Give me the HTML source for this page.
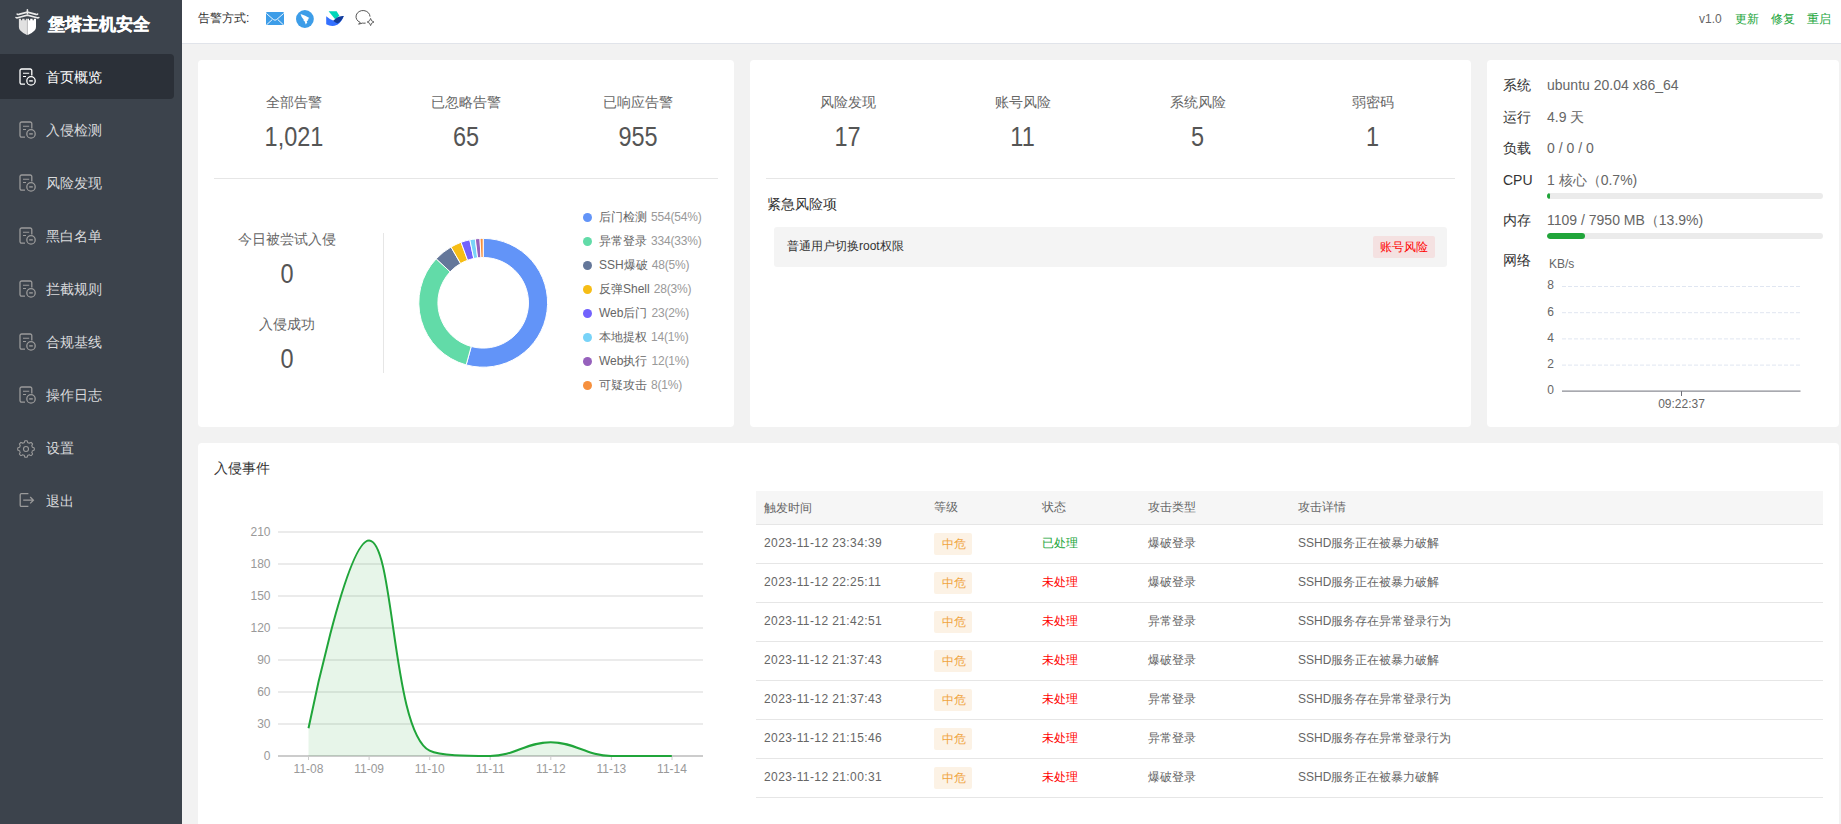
<!DOCTYPE html>
<html><head><meta charset="utf-8"><style>
*{box-sizing:border-box;margin:0;padding:0}
html,body{width:1841px;height:824px;overflow:hidden}
body{background:#f2f2f2;font-family:"Liberation Sans",sans-serif;color:#333;position:relative}
.abs{position:absolute}
#side{position:absolute;left:0;top:0;width:182px;height:824px;background:#3c434c}
#logo{position:absolute;left:48px;top:13.5px;-webkit-text-stroke:0.35px #fff;font-size:17px;font-weight:bold;color:#fff;line-height:22px;letter-spacing:0px}
.act-bg{position:absolute;left:0;top:54px;width:174px;height:45px;background:#2b3038;border-radius:0 4px 4px 0}
.mi{position:absolute;left:0;width:182px;height:0}
.mi span{position:absolute;left:46px;top:-9px;font-size:14px;line-height:20px;color:#d9dadc;white-space:nowrap}
.mi.act span{color:#fff}
#hdr{position:absolute;left:182px;top:0;width:1659px;height:44px;background:#fff;border-bottom:1px solid #e1e4ea}
.card{position:absolute;background:#fff;border-radius:4px}
.stat{position:absolute;text-align:center;width:172px}
.stat .l{font-size:14px;color:#666;line-height:20px}
.stat .n{font-size:27px;color:#555;line-height:30px;margin-top:10.4px;transform:scaleX(0.87)}
.lg{position:absolute;left:582px;height:0}
.lg i{position:absolute;left:0.8px;top:-3.8px;width:9px;height:9px;border-radius:50%}
.lg span{position:absolute;top:-8px;font-size:12px;line-height:16px;white-space:nowrap}
.lg .ln{left:17px;color:#666}
.lg .lv{font-weight:normal;color:#999;margin-left:4px;letter-spacing:-0.2px}
.tr{position:absolute;left:756px;width:1067px;height:39px;border-bottom:1px solid #e6e6e6;font-size:12px;color:#666}
.tr span{position:absolute;top:10px;line-height:16px;white-space:nowrap}
.c1{letter-spacing:0.4px}
.c1{left:8px} .c2{left:178px} .c3{left:286px} .c4{left:392px} .c5{left:542px}
.tag{display:inline-block;font-weight:normal;background:#fcf2e5;color:#f0a43e;padding-left:1px;width:38px;height:22px;line-height:22px;text-align:center;border-radius:2px;margin-top:-2px}
.ok{color:#20a53a} .no{color:#f00}
.ax{font-size:12px;fill:#999;font-family:"Liberation Sans",sans-serif}
.nx{font-size:12px;fill:#666;font-family:"Liberation Sans",sans-serif}
.sys{position:absolute;left:1503px;height:0;font-size:14px;white-space:nowrap}
.sys .k{position:absolute;left:0;top:-10px;line-height:20px;color:#333}
.sys .v{position:absolute;left:44px;top:-10px;line-height:20px;color:#666}
.bar{position:absolute;left:1547px;width:276px;height:6px;background:#ebebeb;border-radius:3px;overflow:hidden}
.bar i{position:absolute;left:0;top:0;height:6px;background:#20a53a;border-radius:3px}
</style></head><body>
<div id="side">
<svg width="50" height="40" style="position:absolute;left:0;top:0">
<g fill="none" stroke="#eaeaea" stroke-width="1.6" stroke-linecap="round"><path d="M27.4 9.8V13.6"/><path d="M17.2 14.1Q17.8 14.6 18.8 14.4L27.4 12.2L36 14.4Q37 14.6 37.6 14.1"/><path d="M16 17.5Q16.6 18 17.6 17.8L27.4 15.2L37.2 17.8Q38.2 18 38.8 17.5"/></g>
<path d="M18.9 18.8H21V20.3H22.2V18.8H24.6V20.3H25.8V18.8H27V35Q22.5 33.2 20.3 30.6Q18.9 29 18.9 27Z" fill="#e1e1e1"/>
<rect x="26.9" y="18.8" width="1" height="16" fill="#bdbdbd"/><path d="M27.8 18.8H29V20.3H30.2V18.8H32.6V20.3H33.8V18.8H36V27Q36 29 34.6 30.6Q32.4 33.2 27.8 35Z" fill="#fff"/>
</svg>
<div id="logo">堡塔主机安全</div>
<div class="act-bg"></div>
<div class="mi act" style="top:76px"><svg width="18" height="19" viewBox="0 0 18 19" style="position:absolute;left:18px;top:-9.5px"><g fill="none" stroke="#fff" stroke-width="1.3"><path d="M7 17.2H3.6a1.6 1.6 0 0 1-1.6-1.6V3.6A1.6 1.6 0 0 1 3.6 2h8.6a1.6 1.6 0 0 1 1.6 1.6V8.6"/><path d="M5 6.2H11.2M5 9.5H8" stroke-width="1.1"/><circle cx="13" cy="13.9" r="4.2"/><path d="M11.2 13.9H14.8" stroke-width="1.4"/></g></svg><span>首页概览</span></div>
<div class="mi" style="top:129px"><svg width="18" height="19" viewBox="0 0 18 19" style="position:absolute;left:18px;top:-9.5px"><g fill="none" stroke="#9a9a9a" stroke-width="1.3"><path d="M7 17.2H3.6a1.6 1.6 0 0 1-1.6-1.6V3.6A1.6 1.6 0 0 1 3.6 2h8.6a1.6 1.6 0 0 1 1.6 1.6V8.6"/><path d="M5 6.2H11.2M5 9.5H8" stroke-width="1.1"/><circle cx="13" cy="13.9" r="4.2"/><path d="M11.2 13.9H14.8" stroke-width="1.4"/></g></svg><span>入侵检测</span></div>
<div class="mi" style="top:182px"><svg width="18" height="19" viewBox="0 0 18 19" style="position:absolute;left:18px;top:-9.5px"><g fill="none" stroke="#9a9a9a" stroke-width="1.3"><path d="M7 17.2H3.6a1.6 1.6 0 0 1-1.6-1.6V3.6A1.6 1.6 0 0 1 3.6 2h8.6a1.6 1.6 0 0 1 1.6 1.6V8.6"/><path d="M5 6.2H11.2M5 9.5H8" stroke-width="1.1"/><circle cx="13" cy="13.9" r="4.2"/><path d="M11.2 13.9H14.8" stroke-width="1.4"/></g></svg><span>风险发现</span></div>
<div class="mi" style="top:235px"><svg width="18" height="19" viewBox="0 0 18 19" style="position:absolute;left:18px;top:-9.5px"><g fill="none" stroke="#9a9a9a" stroke-width="1.3"><path d="M7 17.2H3.6a1.6 1.6 0 0 1-1.6-1.6V3.6A1.6 1.6 0 0 1 3.6 2h8.6a1.6 1.6 0 0 1 1.6 1.6V8.6"/><path d="M5 6.2H11.2M5 9.5H8" stroke-width="1.1"/><circle cx="13" cy="13.9" r="4.2"/><path d="M11.2 13.9H14.8" stroke-width="1.4"/></g></svg><span>黑白名单</span></div>
<div class="mi" style="top:288px"><svg width="18" height="19" viewBox="0 0 18 19" style="position:absolute;left:18px;top:-9.5px"><g fill="none" stroke="#9a9a9a" stroke-width="1.3"><path d="M7 17.2H3.6a1.6 1.6 0 0 1-1.6-1.6V3.6A1.6 1.6 0 0 1 3.6 2h8.6a1.6 1.6 0 0 1 1.6 1.6V8.6"/><path d="M5 6.2H11.2M5 9.5H8" stroke-width="1.1"/><circle cx="13" cy="13.9" r="4.2"/><path d="M11.2 13.9H14.8" stroke-width="1.4"/></g></svg><span>拦截规则</span></div>
<div class="mi" style="top:341px"><svg width="18" height="19" viewBox="0 0 18 19" style="position:absolute;left:18px;top:-9.5px"><g fill="none" stroke="#9a9a9a" stroke-width="1.3"><path d="M7 17.2H3.6a1.6 1.6 0 0 1-1.6-1.6V3.6A1.6 1.6 0 0 1 3.6 2h8.6a1.6 1.6 0 0 1 1.6 1.6V8.6"/><path d="M5 6.2H11.2M5 9.5H8" stroke-width="1.1"/><circle cx="13" cy="13.9" r="4.2"/><path d="M11.2 13.9H14.8" stroke-width="1.4"/></g></svg><span>合规基线</span></div>
<div class="mi" style="top:394px"><svg width="18" height="19" viewBox="0 0 18 19" style="position:absolute;left:18px;top:-9.5px"><g fill="none" stroke="#9a9a9a" stroke-width="1.3"><path d="M7 17.2H3.6a1.6 1.6 0 0 1-1.6-1.6V3.6A1.6 1.6 0 0 1 3.6 2h8.6a1.6 1.6 0 0 1 1.6 1.6V8.6"/><path d="M5 6.2H11.2M5 9.5H8" stroke-width="1.1"/><circle cx="13" cy="13.9" r="4.2"/><path d="M11.2 13.9H14.8" stroke-width="1.4"/></g></svg><span>操作日志</span></div>
<div class="mi" style="top:447px"><svg width="20" height="20" viewBox="0 0 20 20" style="position:absolute;left:16.4px;top:-8.5px"><g fill="none" stroke="#9a9a9a" stroke-width="1.1"><path d="M10.00 1.70L10.54 1.72L11.08 1.77L11.45 2.69L11.71 3.62L12.12 3.75L12.53 3.90L12.92 4.08L13.30 4.28L14.14 3.81L15.05 3.42L15.47 3.76L15.87 4.13L16.24 4.53L16.58 4.95L16.19 5.86L15.72 6.70L15.92 7.08L16.10 7.47L16.25 7.88L16.38 8.29L17.31 8.55L18.23 8.92L18.28 9.46L18.30 10.00L18.28 10.54L18.23 11.08L17.31 11.45L16.38 11.71L16.25 12.12L16.10 12.53L15.92 12.92L15.72 13.30L16.19 14.14L16.58 15.05L16.24 15.47L15.87 15.87L15.47 16.24L15.05 16.58L14.14 16.19L13.30 15.72L12.92 15.92L12.53 16.10L12.12 16.25L11.71 16.38L11.45 17.31L11.08 18.23L10.54 18.28L10.00 18.30L9.46 18.28L8.92 18.23L8.55 17.31L8.29 16.38L7.88 16.25L7.47 16.10L7.08 15.92L6.70 15.72L5.86 16.19L4.95 16.58L4.53 16.24L4.13 15.87L3.76 15.47L3.42 15.05L3.81 14.14L4.28 13.30L4.08 12.92L3.90 12.53L3.75 12.12L3.62 11.71L2.69 11.45L1.77 11.08L1.72 10.54L1.70 10.00L1.72 9.46L1.77 8.92L2.69 8.55L3.62 8.29L3.75 7.88L3.90 7.47L4.08 7.08L4.28 6.70L3.81 5.86L3.42 4.95L3.76 4.53L4.13 4.13L4.53 3.76L4.95 3.42L5.86 3.81L6.70 4.28L7.08 4.08L7.47 3.90L7.88 3.75L8.29 3.62L8.55 2.69L8.92 1.77L9.46 1.72L10.00 1.70Z" stroke-linejoin="round"/><circle cx="10" cy="10" r="2.5"/></g></svg><span>设置</span></div>
<div class="mi" style="top:500px"><svg width="20" height="20" viewBox="0 0 20 20" style="position:absolute;left:16px;top:-10px"><g fill="none" stroke="#9a9a9a" stroke-width="1.3"><path d="M12.4 3.6H5.4a1.2 1.2 0 0 0-1.2 1.2v10.4a1.2 1.2 0 0 0 1.2 1.2h7"/><path d="M7.2 10.2H17.4M14.2 7l3.2 3.2-3.2 3.2"/></g></svg><span>退出</span></div>

</div>
<div id="hdr">
<div class="abs" style="left:16px;top:10px;font-size:12px;line-height:16px;color:#333">告警方式:</div>
<svg class="abs" style="left:-182px;top:0" width="400" height="40">
<rect x="266" y="12" width="18" height="13" rx="1.2" fill="#3d9de8"/><path d="M266.3 13.4L273.3 19.5Q275 21 276.7 19.5L283.7 13.4M266.8 24.6L272.2 19.6M283.2 24.6L277.8 19.6" stroke="#fff" stroke-width="0.9" fill="none"/>
<circle cx="304.9" cy="19" r="8.9" fill="#3d9de8"/><path d="M300.6 14.1Q305.5 15.4 309.4 18L307.6 19.3L308.6 19.8L306.6 21.6L307.3 22.3L305.8 24.6L304.6 21.2L303.4 20.6L303.9 20Q301.2 17.5 300.6 14.1Z" fill="#fff"/>
<path d="M328.6 11.2H336.6L339.4 15.8L335.2 19.2Z" fill="#00d6b9"/>
<path d="M326.2 16.2Q330.5 20 334.2 21L337.8 18.3L343.8 16Q340.5 24.5 334.5 25.8Q330 26.5 326.2 24.2Z" fill="#3370ff"/>
<path d="M333.2 20.8L337 17.6Q340 15.6 343.8 16Q341.5 21.5 337.5 23.5Q335 22.5 333.2 20.8Z" fill="#133c9a"/>
<g fill="none" stroke="#555" stroke-width="1"><path d="M370 16.6A7 6.2 0 1 0 360.2 22.4L358.6 24.2L362.4 23.1Q363.6 23.3 365.6 23.1"/><path d="M370.6 18.4Q371 21.4 374 22Q371 22.6 370.6 25.6Q370.2 22.6 367.2 22Q370.2 21.4 370.6 18.4Z" stroke-linejoin="round" stroke-width="0.9"/></g>
</svg>
<div class="abs" style="left:1517px;top:11px;font-size:12px;line-height:16px;color:#666;white-space:nowrap">v1.0</div>
<div class="abs" style="left:1553px;top:11px;font-size:12px;line-height:16px;color:#20a53a;white-space:nowrap">更新</div>
<div class="abs" style="left:1589px;top:11px;font-size:12px;line-height:16px;color:#20a53a;white-space:nowrap">修复</div>
<div class="abs" style="left:1625px;top:11px;font-size:12px;line-height:16px;color:#20a53a;white-space:nowrap">重启</div>
</div>

<div class="card" style="left:198px;top:60px;width:536px;height:367px"></div>
<div class="card" style="left:750px;top:60px;width:721px;height:367px"></div>
<div class="card" style="left:1487px;top:60px;width:352px;height:367px"></div>
<div class="card" style="left:198px;top:443px;width:1641px;height:400px"></div>

<div class="stat" style="left:208px;top:92px"><div class="l">全部告警</div><div class="n">1,021</div></div>
<div class="stat" style="left:380px;top:92px"><div class="l">已忽略告警</div><div class="n">65</div></div>
<div class="stat" style="left:552px;top:92px"><div class="l">已响应告警</div><div class="n">955</div></div>
<div class="abs" style="left:214px;top:178px;width:504px;height:1px;background:#e6e6e6"></div>
<div class="stat" style="left:201px;top:229px"><div class="l">今日被尝试入侵</div><div class="n" style="margin-top:10.4px">0</div></div>
<div class="stat" style="left:201px;top:314px"><div class="l">入侵成功</div><div class="n" style="margin-top:10.4px">0</div></div>
<div class="abs" style="left:383px;top:233px;width:1px;height:140px;background:#e6e6e6"></div>
<svg class="abs" style="left:0;top:0" width="1841" height="824"><path d="M483.20,238.40A64.4,64.4 0 1 1 466.17,364.91L471.22,346.49A45.3,45.3 0 1 0 483.20,257.50Z" fill="#6294f8" stroke="#fff" stroke-width="1"/>
<path d="M466.17,364.91A64.4,64.4 0 0 1 436.18,258.79L450.13,271.84A45.3,45.3 0 0 0 471.22,346.49Z" fill="#62dba8" stroke="#fff" stroke-width="1"/>
<path d="M436.18,258.79A64.4,64.4 0 0 1 451.03,247.01L460.57,263.56A45.3,45.3 0 0 0 450.13,271.84Z" fill="#64779a" stroke="#fff" stroke-width="1"/>
<path d="M451.03,247.01A64.4,64.4 0 0 1 461.07,242.32L467.63,260.26A45.3,45.3 0 0 0 460.57,263.56Z" fill="#F6BD16" stroke="#fff" stroke-width="1"/>
<path d="M461.07,242.32A64.4,64.4 0 0 1 469.82,239.80L473.79,258.49A45.3,45.3 0 0 0 467.63,260.26Z" fill="#7262fd" stroke="#fff" stroke-width="1"/>
<path d="M469.82,239.80A64.4,64.4 0 0 1 475.29,238.89L477.64,257.84A45.3,45.3 0 0 0 473.79,258.49Z" fill="#78D3F8" stroke="#fff" stroke-width="1"/>
<path d="M475.29,238.89A64.4,64.4 0 0 1 480.03,238.48L480.97,257.55A45.3,45.3 0 0 0 477.64,257.84Z" fill="#9661BC" stroke="#fff" stroke-width="1"/>
<path d="M480.03,238.48A64.4,64.4 0 0 1 483.20,238.40L483.20,257.50A45.3,45.3 0 0 0 480.97,257.55Z" fill="#F6903D" stroke="#fff" stroke-width="1"/></svg>
<div class="lg" style="top:216.8px"><i style="background:#6294f8"></i><span class="ln">后门检测<b class="lv">554(54%)</b></span></div>
<div class="lg" style="top:240.8px"><i style="background:#62dba8"></i><span class="ln">异常登录<b class="lv">334(33%)</b></span></div>
<div class="lg" style="top:264.8px"><i style="background:#64779a"></i><span class="ln">SSH爆破<b class="lv">48(5%)</b></span></div>
<div class="lg" style="top:288.8px"><i style="background:#F6BD16"></i><span class="ln">反弹Shell<b class="lv">28(3%)</b></span></div>
<div class="lg" style="top:312.8px"><i style="background:#7262fd"></i><span class="ln">Web后门<b class="lv">23(2%)</b></span></div>
<div class="lg" style="top:336.8px"><i style="background:#78D3F8"></i><span class="ln">本地提权<b class="lv">14(1%)</b></span></div>
<div class="lg" style="top:360.8px"><i style="background:#9661BC"></i><span class="ln">Web执行<b class="lv">12(1%)</b></span></div>
<div class="lg" style="top:384.8px"><i style="background:#F6903D"></i><span class="ln">可疑攻击<b class="lv">8(1%)</b></span></div>


<div class="stat" style="left:760px;top:92px;width:175px"><div class="l">风险发现</div><div class="n">17</div></div>
<div class="stat" style="left:935px;top:92px;width:175px"><div class="l">账号风险</div><div class="n">11</div></div>
<div class="stat" style="left:1110px;top:92px;width:175px"><div class="l">系统风险</div><div class="n">5</div></div>
<div class="stat" style="left:1285px;top:92px;width:175px"><div class="l">弱密码</div><div class="n">1</div></div>
<div class="abs" style="left:766px;top:178px;width:689px;height:1px;background:#e6e6e6"></div>
<div class="abs" style="left:767px;top:194px;font-size:14px;line-height:20px;color:#333">紧急风险项</div>
<div class="abs" style="left:774px;top:227px;width:673px;height:40px;background:#f4f4f4;border-radius:3px"></div>
<div class="abs" style="left:787px;top:238px;font-size:12px;line-height:16px;color:#333;white-space:nowrap">普通用户切换root权限</div>
<div class="abs" style="left:1373px;top:236px;width:62px;height:22px;background:#f4e1e1;color:#ff0000;font-size:12px;line-height:22px;text-align:center;border-radius:2px">账号风险</div>

<div class="sys" style="top:85px"><span class="k">系统</span><span class="v">ubuntu 20.04 x86_64</span></div>
<div class="sys" style="top:117px"><span class="k">运行</span><span class="v">4.9 天</span></div>
<div class="sys" style="top:148px"><span class="k">负载</span><span class="v">0 / 0 / 0</span></div>
<div class="sys" style="top:180px"><span class="k">CPU</span><span class="v">1 核心（0.7%)</span></div>
<div class="bar" style="top:193px"><i style="width:3px"></i></div>
<div class="sys" style="top:220px"><span class="k">内存</span><span class="v">1109 / 7950 MB（13.9%)</span></div>
<div class="bar" style="top:233px"><i style="width:38px"></i></div>
<div class="sys" style="top:260px"><span class="k">网络</span></div>
<div class="abs" style="left:1549px;top:256px;font-size:12px;line-height:16px;color:#666">KB/s</div>
<svg class="abs" style="left:0;top:0" width="1841" height="824"><line x1="1562" x2="1800.5" y1="286.5" y2="286.5" stroke="#e0e6f1" stroke-width="1" stroke-dasharray="4 2"/><line x1="1562" x2="1800.5" y1="312.7" y2="312.7" stroke="#e0e6f1" stroke-width="1" stroke-dasharray="4 2"/><line x1="1562" x2="1800.5" y1="338.9" y2="338.9" stroke="#e0e6f1" stroke-width="1" stroke-dasharray="4 2"/><line x1="1562" x2="1800.5" y1="365.1" y2="365.1" stroke="#e0e6f1" stroke-width="1" stroke-dasharray="4 2"/><text x="1550.5" y="289.3" text-anchor="middle" class="nx">8</text><text x="1550.5" y="315.6" text-anchor="middle" class="nx">6</text><text x="1550.5" y="341.8" text-anchor="middle" class="nx">4</text><text x="1550.5" y="368.1" text-anchor="middle" class="nx">2</text><text x="1550.5" y="394.3" text-anchor="middle" class="nx">0</text><line x1="1562" x2="1800.5" y1="391.1" y2="391.1" stroke="#6e7079" stroke-width="1"/><line x1="1681.5" x2="1681.5" y1="391.1" y2="396" stroke="#6e7079" stroke-width="1"/><text x="1681.5" y="407.5" text-anchor="middle" class="nx">09:22:37</text></svg>

<div class="abs" style="left:214px;top:458px;font-size:14px;line-height:20px;color:#333">入侵事件</div>
<svg class="abs" style="left:0;top:0" width="1841" height="824"><line x1="278" x2="703" y1="532" y2="532" stroke="#ebebeb" stroke-width="2"/><text x="270.5" y="536.2" text-anchor="end" class="ax">210</text><line x1="278" x2="703" y1="564" y2="564" stroke="#ebebeb" stroke-width="2"/><text x="270.5" y="568.2" text-anchor="end" class="ax">180</text><line x1="278" x2="703" y1="596" y2="596" stroke="#ebebeb" stroke-width="2"/><text x="270.5" y="600.2" text-anchor="end" class="ax">150</text><line x1="278" x2="703" y1="628" y2="628" stroke="#ebebeb" stroke-width="2"/><text x="270.5" y="632.2" text-anchor="end" class="ax">120</text><line x1="278" x2="703" y1="660" y2="660" stroke="#ebebeb" stroke-width="2"/><text x="270.5" y="664.2" text-anchor="end" class="ax">90</text><line x1="278" x2="703" y1="692" y2="692" stroke="#ebebeb" stroke-width="2"/><text x="270.5" y="696.2" text-anchor="end" class="ax">60</text><line x1="278" x2="703" y1="724" y2="724" stroke="#ebebeb" stroke-width="2"/><text x="270.5" y="728.2" text-anchor="end" class="ax">30</text><text x="270.5" y="760.2" text-anchor="end" class="ax">0</text><line x1="278" x2="703" y1="756" y2="756" stroke="#cccccc" stroke-width="2"/><line x1="308.5" x2="308.5" y1="756" y2="760" stroke="#cccccc" stroke-width="1"/><text x="308.5" y="772.8" text-anchor="middle" class="ax">11-08</text><line x1="369.1" x2="369.1" y1="756" y2="760" stroke="#cccccc" stroke-width="1"/><text x="369.1" y="772.8" text-anchor="middle" class="ax">11-09</text><line x1="429.7" x2="429.7" y1="756" y2="760" stroke="#cccccc" stroke-width="1"/><text x="429.7" y="772.8" text-anchor="middle" class="ax">11-10</text><line x1="490.2" x2="490.2" y1="756" y2="760" stroke="#cccccc" stroke-width="1"/><text x="490.2" y="772.8" text-anchor="middle" class="ax">11-11</text><line x1="550.8" x2="550.8" y1="756" y2="760" stroke="#cccccc" stroke-width="1"/><text x="550.8" y="772.8" text-anchor="middle" class="ax">11-12</text><line x1="611.4" x2="611.4" y1="756" y2="760" stroke="#cccccc" stroke-width="1"/><text x="611.4" y="772.8" text-anchor="middle" class="ax">11-13</text><line x1="672.0" x2="672.0" y1="756" y2="760" stroke="#cccccc" stroke-width="1"/><text x="672.0" y="772.8" text-anchor="middle" class="ax">11-14</text>
<path d="M308.50,728.27 C308.50,728.27 346.08,540.53 369.05,540.53 C394.52,540.53 391.70,731.48 429.60,750.67 C440.14,756.00 466.19,756.00 490.15,756.00 C514.63,756.00 526.48,742.13 550.70,742.13 C574.92,742.13 586.72,756.00 611.25,756.00 C635.16,756.00 671.80,756.00 671.80,756.00 L671.80,756 L308.50,756 Z" fill="rgba(32,165,58,0.11)"/>
<path d="M308.50,728.27 C308.50,728.27 346.08,540.53 369.05,540.53 C394.52,540.53 391.70,731.48 429.60,750.67 C440.14,756.00 466.19,756.00 490.15,756.00 C514.63,756.00 526.48,742.13 550.70,742.13 C574.92,742.13 586.72,756.00 611.25,756.00 C635.16,756.00 671.80,756.00 671.80,756.00" fill="none" stroke="#20a53a" stroke-width="2"/>
</svg>
<div class="abs" style="left:756px;top:491px;width:1067px;height:34px;background:#f6f6f6;border-bottom:1px solid #e6e6e6;font-size:12px;color:#666">
<span class="abs" style="left:8px;top:8.5px;line-height:16px">触发时间</span><span class="abs" style="left:178px;top:8px;line-height:16px">等级</span><span class="abs" style="left:286px;top:8px;line-height:16px">状态</span><span class="abs" style="left:392px;top:8px;line-height:16px">攻击类型</span><span class="abs" style="left:542px;top:8px;line-height:16px">攻击详情</span>
</div>
<div class="tr" style="top:525px"><span class="c1">2023-11-12 23:34:39</span><span class="c2"><b class="tag">中危</b></span><span class="c3 ok">已处理</span><span class="c4">爆破登录</span><span class="c5">SSHD服务正在被暴力破解</span></div>
<div class="tr" style="top:564px"><span class="c1">2023-11-12 22:25:11</span><span class="c2"><b class="tag">中危</b></span><span class="c3 no">未处理</span><span class="c4">爆破登录</span><span class="c5">SSHD服务正在被暴力破解</span></div>
<div class="tr" style="top:603px"><span class="c1">2023-11-12 21:42:51</span><span class="c2"><b class="tag">中危</b></span><span class="c3 no">未处理</span><span class="c4">异常登录</span><span class="c5">SSHD服务存在异常登录行为</span></div>
<div class="tr" style="top:642px"><span class="c1">2023-11-12 21:37:43</span><span class="c2"><b class="tag">中危</b></span><span class="c3 no">未处理</span><span class="c4">爆破登录</span><span class="c5">SSHD服务正在被暴力破解</span></div>
<div class="tr" style="top:681px"><span class="c1">2023-11-12 21:37:43</span><span class="c2"><b class="tag">中危</b></span><span class="c3 no">未处理</span><span class="c4">异常登录</span><span class="c5">SSHD服务存在异常登录行为</span></div>
<div class="tr" style="top:720px"><span class="c1">2023-11-12 21:15:46</span><span class="c2"><b class="tag">中危</b></span><span class="c3 no">未处理</span><span class="c4">异常登录</span><span class="c5">SSHD服务存在异常登录行为</span></div>
<div class="tr" style="top:759px"><span class="c1">2023-11-12 21:00:31</span><span class="c2"><b class="tag">中危</b></span><span class="c3 no">未处理</span><span class="c4">爆破登录</span><span class="c5">SSHD服务正在被暴力破解</span></div>

</body></html>
